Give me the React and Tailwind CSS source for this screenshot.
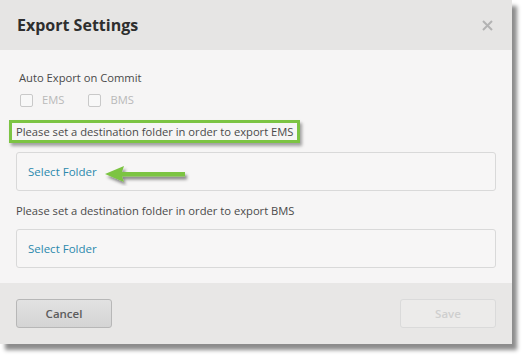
import React from 'react';

const font = { fontFamily: '"Open Sans", "Liberation Sans", sans-serif' };

function Checkbox({ label }) {
  return (
    <label className="flex items-center gap-[9px] text-[11.2px] text-[#b9b9b9]">
      <span className="w-[13px] h-[13px] border border-[#c9c9c9] rounded-[2px] bg-[#f8f8f8]" />
      {label}
    </label>
  );
}

function FolderField({ children }) {
  return (
    <div className="relative h-[39px] border border-[#d9d9d9] rounded-[3px] bg-[#f7f6f6] flex items-center px-[11px]">
      <span className="text-[11.5px] text-[#2b89ad]">Select Folder</span>
      {children}
    </div>
  );
}

// Flèche verte d'annotation
function Arrow() {
  return (
    <svg className="absolute left-[86px] top-[11px]" width="90" height="22" viewBox="0 0 90 22">
      <defs>
        <filter id="sh" x="-20%" y="-50%" width="140%" height="200%">
          <feDropShadow dx="2" dy="3" stdDeviation="1.5" floodColor="#000" floodOpacity="0.45" />
        </filter>
      </defs>
      <path d="M2 10 L21 2 L19 8 L82 8 L82 12.5 L19 12.5 L21 18 Z" fill="#7cc443" filter="url(#sh)" />
    </svg>
  );
}

export default function App() {
  return (
    <div className="w-[524px] h-[356px] bg-white" style={font}>
      <div className="w-[512px] shadow-[5px_6px_4px_rgba(0,0,0,0.45)]">
        {/* En-tête */}
        <div className="h-[50px] bg-[#e6e5e4] flex items-center justify-between pl-[17px] pr-[19px]">
          <h1 className="text-[16px] font-bold text-[#2e2e2e]">Export Settings</h1>
          <svg width="11" height="11" viewBox="0 0 11 11">
            <path d="M1 1 L10 10 M10 1 L1 10" stroke="#b3b3b3" strokeWidth="2" />
          </svg>
        </div>

        {/* Corps */}
        <div className="bg-[#f6f5f5] px-[16px] pt-[19px] pb-[15px] text-[11.2px] text-[#4a4a4a]">
          <div className="pl-[3px] leading-[17px]">Auto Export on Commit</div>
          <div className="flex gap-[24px] pl-[4px] mt-[6px] h-[16px] items-center">
            <Checkbox label="EMS" />
            <Checkbox label="BMS" />
          </div>
          <div className="mt-[12px] -ml-[7px] inline-block border-[3px] border-[#7cc443] pl-[4px] pr-[3px] leading-[17px] shadow-[2px_3px_3px_rgba(0,0,0,0.35)]">
            Please set a destination folder in order to export EMS
          </div>
          <div className="mt-[9px]">
            <FolderField>
              <Arrow />
            </FolderField>
          </div>
          <div className="mt-[11px] leading-[17px]">Please set a destination folder in order to export BMS</div>
          <div className="mt-[10px]">
            <FolderField />
          </div>
        </div>

        {/* Pied */}
        <div className="h-[61px] bg-[#e8e7e6] flex items-center justify-between px-[16px]">
          <button className="w-[96px] h-[29px] rounded-[3px] border border-[#b7b7b7] bg-gradient-to-b from-[#e2e2e2] to-[#d4d4d4] text-[11.5px] font-semibold text-[#5c5c5c]">
            Cancel
          </button>
          <button className="w-[96px] h-[29px] rounded-[3px] border border-[#dadada] bg-[#ecebea] text-[11.5px] font-semibold text-[#cfcfcf]">
            Save
          </button>
        </div>
      </div>
    </div>
  );
}
